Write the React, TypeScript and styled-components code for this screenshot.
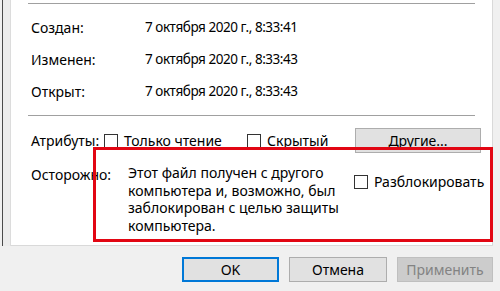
import React from "react";
import styled, { createGlobalStyle } from "styled-components";

const GlobalStyle = createGlobalStyle`
  body {
    margin: 0;
    background: #f0f0f0;
    font-family: "Noto Sans", "Open Sans", sans-serif;
    color: #000;
  }
`;

// Dialog frame
const Window = styled.div`
  position: relative;
  width: 500px;
  height: 291px;
  overflow: hidden;
  background: #f0f0f0;
  display: flex;
  flex-direction: column;
  font-size: 14px;
`;

const Top = styled.div`
  display: flex;
  height: 246px;
`;

const LeftStrip = styled.div`
  width: 11px;
  box-sizing: border-box;
  border-left: 2px solid #f0f0f0;
  border-right: 1px solid #dcdcdc;
  background: linear-gradient(to right, #4a4a4a 0, #4a4a4a 1px, #ececec 1px);
`;

const Panel = styled.div`
  width: 482px;
  box-sizing: border-box;
  background: #fff;
  border-right: 1px solid #d9d9d9;
  border-bottom: 1px solid #d9d9d9;
  padding: 3px 0 0 17px;
`;

const Separator = styled.div`
  width: 447px;
  height: 1px;
  background: #a0a0a0;
`;

// Date rows
const InfoList = styled.div`
  padding: 7px 0 8px 3px;
`;

const InfoRow = styled.div`
  display: flex;
  height: 32px;
  align-items: center;
`;

const Label = styled.div<{ $w: number }>`
  flex: 0 0 ${(p) => p.$w}px;
  white-space: nowrap;
`;

const DateValue = styled.span`
  font-size: 13.5px;
  letter-spacing: -0.45px;
  white-space: nowrap;
`;

// Attributes
const AttrRow = styled.div`
  display: flex;
  align-items: center;
  height: 25px;
  margin-top: 12px;
  padding-left: 3px;
`;

const CheckGroup = styled.label<{ $w?: number }>`
  display: flex;
  align-items: center;
  gap: 6px;
  width: ${(p) => (p.$w ? `${p.$w}px` : "auto")};
  flex-shrink: 0;
  white-space: nowrap;
`;

const Box = styled.span`
  width: 14px;
  height: 14px;
  box-sizing: border-box;
  border: 1px solid #333;
  background: #fff;
  flex-shrink: 0;
`;

const Button = styled.button<{ $w: number; $primary?: boolean }>`
  width: ${(p) => p.$w}px;
  height: 25px;
  box-sizing: border-box;
  padding: 0;
  font: inherit;
  color: #000;
  background: #e1e1e1;
  border: ${(p) => (p.$primary ? "2px solid #0078d7" : "1px solid #adadad")};

  &:disabled {
    background: #cccccc;
    border-color: #bfbfbf;
    color: #838383;
  }
`;

// Security warning
const WarnRow = styled.div`
  display: flex;
  align-items: flex-start;
  margin-top: 11px;
  padding-left: 3px;
`;

const WarnLabel = styled(Label)`
  margin-top: 1px;
`;

const Message = styled.div`
  flex: 0 0 226px;
  line-height: 17.5px;
`;

const Unblock = styled(CheckGroup)`
  margin-top: 8px;
`;

const Highlight = styled.div`
  position: absolute;
  left: 93px;
  top: 147px;
  width: 400px;
  height: 95px;
  box-sizing: border-box;
  border: 3px solid #e20613;
  pointer-events: none;
`;

// Bottom buttons
const Footer = styled.div`
  display: flex;
  gap: 10px;
  padding: 11px 0 0 182px;
`;

const App: React.FC = () => {
  return (
    <Window>
      <GlobalStyle />
      <Top>
        <LeftStrip />
        <Panel>
          <Separator />
          <InfoList>
            <InfoRow>
              <Label $w={114}>Создан:</Label>
              <DateValue>7 октября 2020 г., 8:33:41</DateValue>
            </InfoRow>
            <InfoRow>
              <Label $w={114}>Изменен:</Label>
              <DateValue>7 октября 2020 г., 8:33:43</DateValue>
            </InfoRow>
            <InfoRow>
              <Label $w={114}>Открыт:</Label>
              <DateValue>7 октября 2020 г., 8:33:43</DateValue>
            </InfoRow>
          </InfoList>
          <Separator />
          <AttrRow>
            <Label $w={73}>Атрибуты:</Label>
            <CheckGroup $w={143}>
              <Box />
              Только чтение
            </CheckGroup>
            <CheckGroup $w={108}>
              <Box />
              Скрытый
            </CheckGroup>
            <Button $w={126}>Другие...</Button>
          </AttrRow>
          <WarnRow>
            <WarnLabel $w={97}>Осторожно:</WarnLabel>
            <Message>
              Этот файл получен с другого
              <br />
              компьютера и, возможно, был
              <br />
              заблокирован с целью защиты
              <br />
              компьютера.
            </Message>
            <Unblock>
              <Box />
              Разблокировать
            </Unblock>
          </WarnRow>
        </Panel>
      </Top>
      <Footer>
        <Button $w={97} $primary>
          OK
        </Button>
        <Button $w={98}>Отмена</Button>
        <Button $w={96} disabled>
          Применить
        </Button>
      </Footer>
      <Highlight />
    </Window>
  );
};

export default App;
